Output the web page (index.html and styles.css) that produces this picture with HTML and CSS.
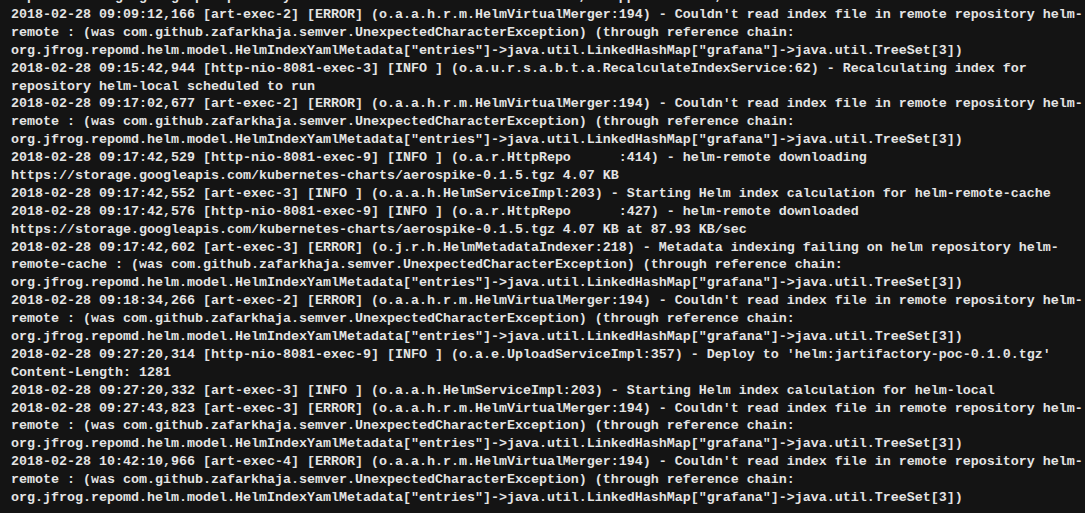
FILE: index.html
```html
<!DOCTYPE html>
<html lang="en">
<head>
<meta charset="utf-8">
<title>Artifactory log</title>
<link rel="stylesheet" href="styles.css">
</head>
<body>
<main class="terminal">
<div class="clipped"><pre class="log log-prev">Unpacked all go goalgo p repository: helm remote indexes from the chart, skipped entries, stale caches</pre></div>
<pre class="log">2018-02-28 09:09:12,166 [art-exec-2] [ERROR] (o.a.a.h.r.m.HelmVirtualMerger:194) - Couldn't read index file in remote repository helm-
remote : (was com.github.zafarkhaja.semver.UnexpectedCharacterException) (through reference chain:
org.jfrog.repomd.helm.model.HelmIndexYamlMetadata["entries"]-&gt;java.util.LinkedHashMap["grafana"]-&gt;java.util.TreeSet[3])
2018-02-28 09:15:42,944 [http-nio-8081-exec-3] [INFO ] (o.a.u.r.s.a.b.t.a.RecalculateIndexService:62) - Recalculating index for
repository helm-local scheduled to run
2018-02-28 09:17:02,677 [art-exec-2] [ERROR] (o.a.a.h.r.m.HelmVirtualMerger:194) - Couldn't read index file in remote repository helm-
remote : (was com.github.zafarkhaja.semver.UnexpectedCharacterException) (through reference chain:
org.jfrog.repomd.helm.model.HelmIndexYamlMetadata["entries"]-&gt;java.util.LinkedHashMap["grafana"]-&gt;java.util.TreeSet[3])
2018-02-28 09:17:42,529 [http-nio-8081-exec-9] [INFO ] (o.a.r.HttpRepo      :414) - helm-remote downloading
https://storage.googleapis.com/kubernetes-charts/aerospike-0.1.5.tgz 4.07 KB
2018-02-28 09:17:42,552 [art-exec-3] [INFO ] (o.a.a.h.HelmServiceImpl:203) - Starting Helm index calculation for helm-remote-cache
2018-02-28 09:17:42,576 [http-nio-8081-exec-9] [INFO ] (o.a.r.HttpRepo      :427) - helm-remote downloaded
https://storage.googleapis.com/kubernetes-charts/aerospike-0.1.5.tgz 4.07 KB at 87.93 KB/sec
2018-02-28 09:17:42,602 [art-exec-3] [ERROR] (o.j.r.h.HelmMetadataIndexer:218) - Metadata indexing failing on helm repository helm-
remote-cache : (was com.github.zafarkhaja.semver.UnexpectedCharacterException) (through reference chain:
org.jfrog.repomd.helm.model.HelmIndexYamlMetadata["entries"]-&gt;java.util.LinkedHashMap["grafana"]-&gt;java.util.TreeSet[3])
2018-02-28 09:18:34,266 [art-exec-2] [ERROR] (o.a.a.h.r.m.HelmVirtualMerger:194) - Couldn't read index file in remote repository helm-
remote : (was com.github.zafarkhaja.semver.UnexpectedCharacterException) (through reference chain:
org.jfrog.repomd.helm.model.HelmIndexYamlMetadata["entries"]-&gt;java.util.LinkedHashMap["grafana"]-&gt;java.util.TreeSet[3])
2018-02-28 09:27:20,314 [http-nio-8081-exec-9] [INFO ] (o.a.e.UploadServiceImpl:357) - Deploy to 'helm:jartifactory-poc-0.1.0.tgz'
Content-Length: 1281
2018-02-28 09:27:20,332 [art-exec-3] [INFO ] (o.a.a.h.HelmServiceImpl:203) - Starting Helm index calculation for helm-local
2018-02-28 09:27:43,823 [art-exec-3] [ERROR] (o.a.a.h.r.m.HelmVirtualMerger:194) - Couldn't read index file in remote repository helm-
remote : (was com.github.zafarkhaja.semver.UnexpectedCharacterException) (through reference chain:
org.jfrog.repomd.helm.model.HelmIndexYamlMetadata["entries"]-&gt;java.util.LinkedHashMap["grafana"]-&gt;java.util.TreeSet[3])
2018-02-28 10:42:10,966 [art-exec-4] [ERROR] (o.a.a.h.r.m.HelmVirtualMerger:194) - Couldn't read index file in remote repository helm-
remote : (was com.github.zafarkhaja.semver.UnexpectedCharacterException) (through reference chain:
org.jfrog.repomd.helm.model.HelmIndexYamlMetadata["entries"]-&gt;java.util.LinkedHashMap["grafana"]-&gt;java.util.TreeSet[3])</pre>
</main>
</body>
</html>
```

FILE: styles.css
```css
html, body {
  margin: 0;
  padding: 0;
  background: #141414;
  height: 100%;
  overflow: hidden;
}

.terminal {
  background: #141414;
  height: 100%;
  padding: 0 0 0 11px;
  box-sizing: border-box;
}

.clipped {
  height: 6px;
  overflow: hidden;
}

.log {
  margin: 0;
  font-family: "Liberation Mono", "DejaVu Sans Mono", monospace;
  font-size: 13.333px;
  font-weight: bold;
  line-height: 17.89px;
  color: #e4e4e4;
  white-space: pre;
}

.log-prev {
  margin-top: -12.5px;
}
```
